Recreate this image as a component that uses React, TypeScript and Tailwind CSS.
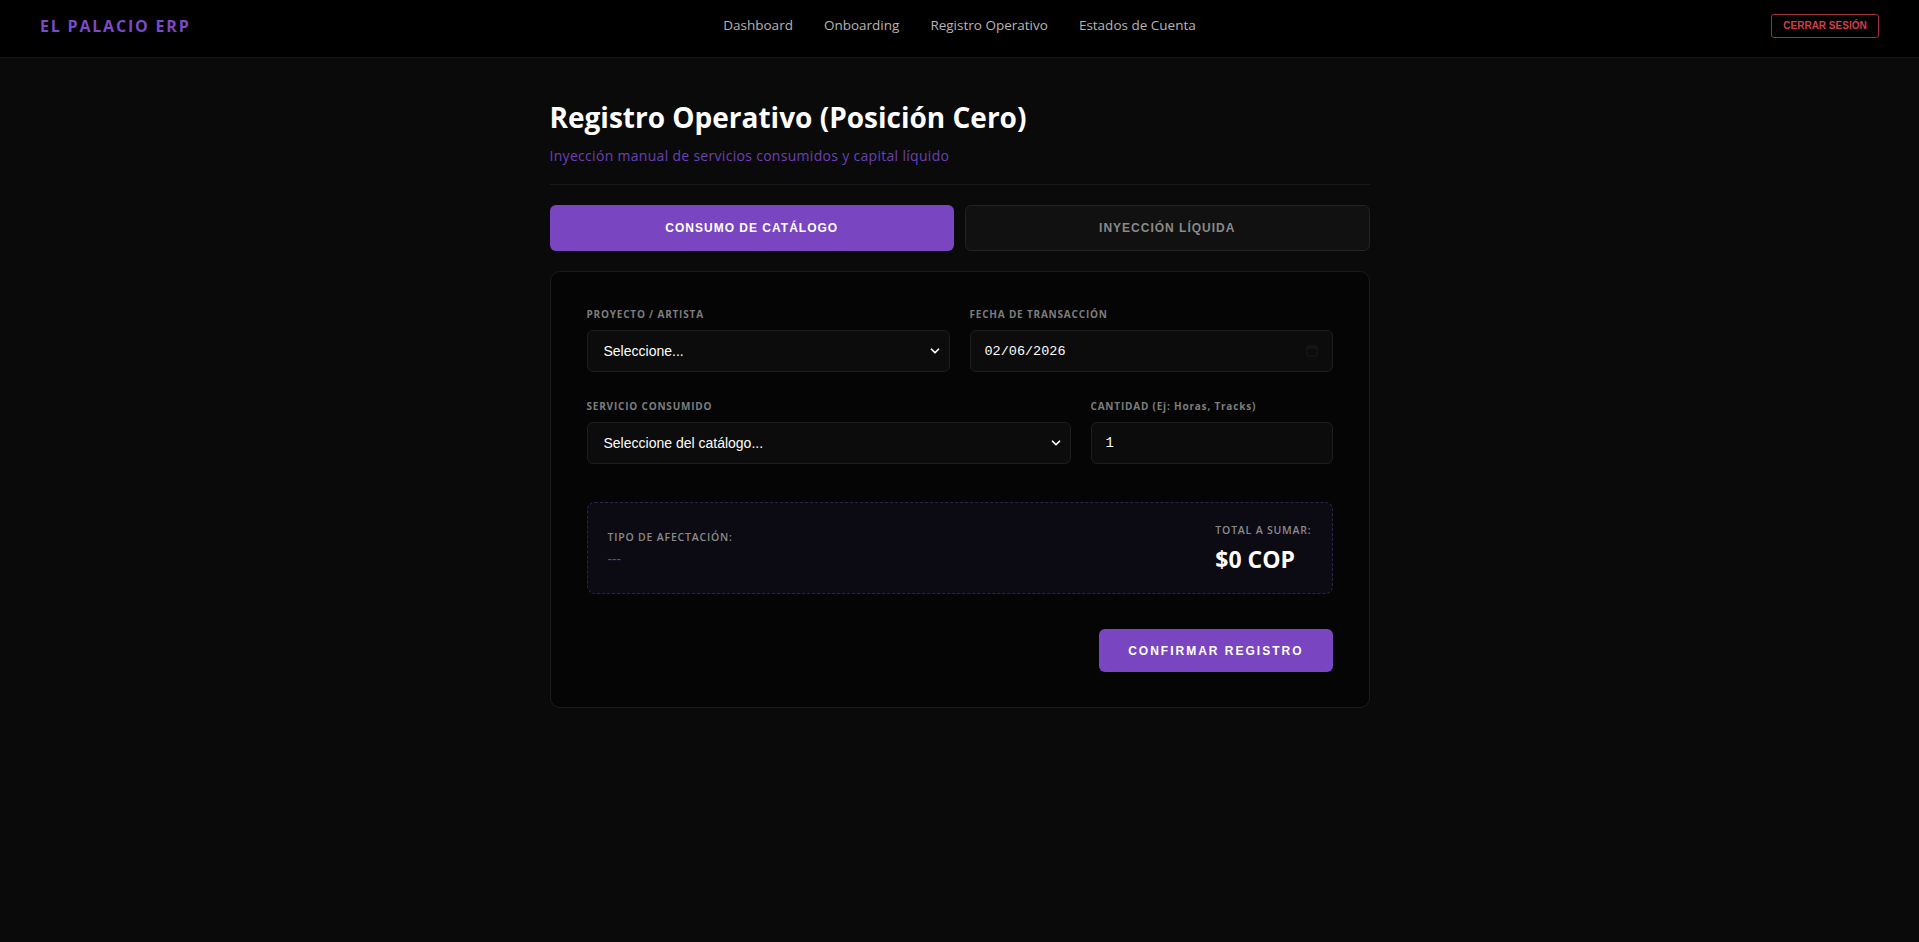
import React from 'react'
import { ChevronDown } from 'lucide-react'

const navLinks = ['Dashboard', 'Onboarding', 'Registro Operativo', 'Estados de Cuenta']

const Label = (props: { children: React.ReactNode }) => (
  <label className="block mb-[10px] text-[10px] leading-[12px] font-bold tracking-[0.8px] text-[#7d7d7d]">
    {props.children}
  </label>
)

const FakeSelect = (props: { text: string }) => (
  <div className="relative">
    <select
      defaultValue=""
      className="w-full h-[42px] appearance-none rounded-md border border-[#1e1e1e] bg-[#0c0c0c] pl-4 pr-10 text-[14px] text-white font-['Liberation_Sans',Arial,sans-serif] outline-none"
    >
      <option value="">{props.text}</option>
    </select>
    <ChevronDown
      size={14}
      strokeWidth={3}
      className="pointer-events-none absolute right-[8px] top-[14px] text-white"
    />
  </div>
)

export default function App() {
  return (
    <div className="min-h-screen bg-[#0a0a0a] font-['Open_Sans',sans-serif]">
      <nav className="h-[58px] pb-[6px] bg-black border-b border-[#161616] px-10 grid grid-cols-[1fr_auto_1fr] items-center">
        <div className="text-[16px] font-bold tracking-[1.8px] text-[#7b4ac6]">EL PALACIO ERP</div>
        <div className="flex items-center gap-[31px]">
          {navLinks.map((link) => (
            <a key={link} className="text-[13.5px] text-[#b5b5b5] cursor-pointer">
              {link}
            </a>
          ))}
        </div>
        <div className="flex justify-end">
          <button className="h-[24px] w-[108px] rounded-[3px] border border-[#a12f3d] text-[10px] font-bold text-[#d03f4f] font-['Liberation_Sans',Arial,sans-serif]">
            CERRAR SESIÓN
          </button>
        </div>
      </nav>

      <main className="mx-auto w-[820px] pt-[42px]">
        <h1 className="text-[28px] leading-[34px] font-bold text-white">Registro Operativo (Posición Cero)</h1>
        <p className="mt-[12px] pb-[18px] border-b border-[#1a1a1a] text-[14px] leading-[20px] tracking-[0.3px] text-[#6b40b5]">
          Inyección manual de servicios consumidos y capital líquido
        </p>

        <div className="mt-[20px] grid grid-cols-2 gap-[11px] font-['Liberation_Sans',Arial,sans-serif]">
          <button className="h-[46px] rounded-md bg-[#7a45c0] text-[12px] font-bold tracking-[1px] text-white">
            CONSUMO DE CATÁLOGO
          </button>
          <button className="h-[46px] rounded-md border border-[#232323] bg-[#111111] text-[12px] font-bold tracking-[1px] text-[#8a8a8a]">
            INYECCIÓN LÍQUIDA
          </button>
        </div>

        <section className="mt-[20px] rounded-[10px] border border-[#1b1b1b] bg-[#050505] px-9 pt-9 pb-[35px]">
          <div className="grid grid-cols-2 gap-x-5">
            <div>
              <Label>PROYECTO / ARTISTA</Label>
              <FakeSelect text="Seleccione..." />
            </div>
            <div>
              <Label>FECHA DE TRANSACCIÓN</Label>
              <div className="relative">
                <input
                  readOnly
                  value="02/06/2026"
                  className="w-full h-[42px] rounded-md border border-[#1e1e1e] bg-[#0c0c0c] pl-[14px] text-[13.5px] text-white font-['Liberation_Mono',monospace] outline-none"
                />
                <svg
                  width="12"
                  height="13"
                  viewBox="0 0 12 13"
                  className="pointer-events-none absolute right-[15px] top-[14px]"
                >
                  <rect x="1" y="2" width="10" height="10" rx="1.5" fill="none" stroke="#151515" strokeWidth="1.5" />
                  <rect x="1" y="2" width="10" height="3" fill="#151515" />
                </svg>
              </div>
            </div>
          </div>

          <div className="mt-7 grid grid-cols-[2fr_1fr] gap-x-5">
            <div>
              <Label>SERVICIO CONSUMIDO</Label>
              <FakeSelect text="Seleccione del catálogo..." />
            </div>
            <div>
              <Label>CANTIDAD (Ej: Horas, Tracks)</Label>
              <input
                readOnly
                value="1"
                className="w-full h-[42px] rounded-md border border-[#1e1e1e] bg-[#0c0c0c] pl-[14px] text-[14px] text-white font-['Liberation_Mono',monospace] outline-none"
              />
            </div>
          </div>

          <div className="mt-[38px] h-[92px] rounded-lg border border-dashed border-[#2d2445] bg-[#0c0a12] px-5 flex items-center justify-between">
            <div className="flex flex-col gap-2">
              <span className="text-[10.5px] leading-[14px] font-semibold tracking-[0.8px] text-[#8a8a8a]">
                TIPO DE AFECTACIÓN:
              </span>
              <span className="text-[14px] leading-[14px] text-[#6b40b5]">---</span>
            </div>
            <div className="flex flex-col gap-2">
              <span className="text-[10.5px] leading-[14px] font-semibold tracking-[0.8px] text-[#8a8a8a]">
                TOTAL A SUMAR:
              </span>
              <span className="text-[23px] leading-[28px] font-bold text-white">$0 COP</span>
            </div>
          </div>

          <div className="mt-[35px] flex justify-end">
            <button className="h-[43px] px-[29px] rounded-md bg-[#7a45c0] text-[12px] font-bold tracking-[2px] text-white font-['Liberation_Sans',Arial,sans-serif]">
              CONFIRMAR REGISTRO
            </button>
          </div>
        </section>
      </main>
    </div>
  )
}
